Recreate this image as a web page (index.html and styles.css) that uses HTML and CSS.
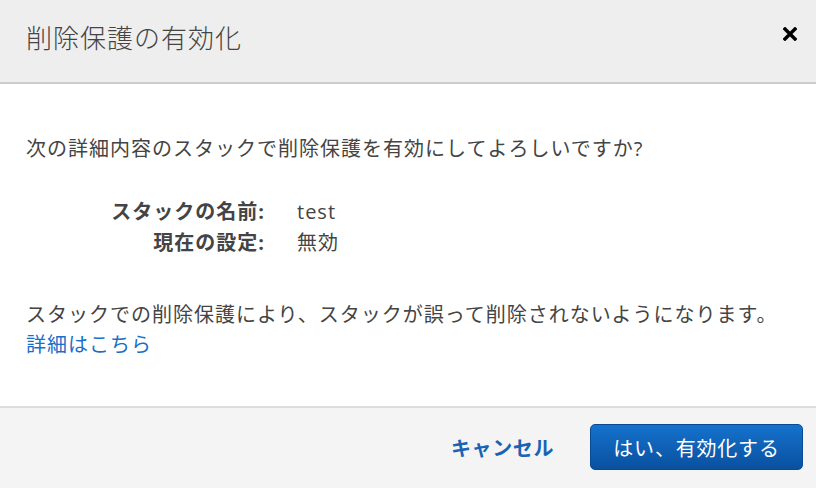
FILE: index.html
```html
<!DOCTYPE html>
<html lang="ja">
<head>
    <meta charset="UTF-8">
    <meta name="viewport" content="width=device-width, initial-scale=1.0">
    <title>削除保護の有効化</title>
    <link rel="stylesheet" href="styles.css">
</head>
<body>

    <div class="modal">
        <div class="modal-header">
            <h2>削除保護の有効化</h2>
            <span class="close">
                <svg width="14" height="14" viewBox="0 0 14 14">
                    <path d="M2 2 L12 12 M12 2 L2 12" stroke="#000" stroke-width="3.4" stroke-linecap="square"/>
                </svg>
            </span>
        </div>

        <div class="modal-body">
            <p class="question">次の詳細内容のスタックで削除保護を有効にしてよろしいですか?</p>

            <div class="details">
                <div class="label">スタックの名前:</div>
                <div class="value">test</div>
                <div class="label">現在の設定:</div>
                <div class="value">無効</div>
            </div>

            <p class="note">
                スタックでの削除保護により、スタックが誤って削除されないようになります。<br>
                <a href="#">詳細はこちら</a>
            </p>
        </div>

        <div class="modal-footer">
            <button class="btn-cancel">キャンセル</button>
            <button class="btn-primary">はい、有効化する</button>
        </div>
    </div>

</body>
</html>
```

FILE: styles.css
```css
html, body {
    margin: 0;
    padding: 0;
    height: 100%;
}

body {
    font-family: "Open Sans", "Noto Sans CJK JP", sans-serif;
    color: #444;
    background-color: #fff;
}

.modal {
    display: flex;
    flex-direction: column;
    height: 488px;
}

.modal-header {
    display: flex;
    align-items: center;
    justify-content: space-between;
    height: 82px;
    padding: 0 19px 0 26px;
    background-color: #eee;
    border-bottom: 2px solid #ccc;
}

.modal-header h2 {
    margin: 0 0 8px;
    font-size: 26px;
    font-weight: 300;
    color: #444;
    letter-spacing: 1px;
}

.close {
    display: flex;
    margin-bottom: 14px;
    cursor: pointer;
}

.modal-body {
    flex: 1;
    padding: 0 26px;
    font-size: 20px;
    letter-spacing: 1px;
}

.question {
    margin: 50px 0 0;
    line-height: 30px;
}

.details {
    display: grid;
    grid-template-columns: 239px auto;
    column-gap: 32px;
    row-gap: 1px;
    margin-top: 33px;
    line-height: 30px;
}

.label {
    text-align: right;
    font-weight: bold;
}

.note {
    margin: 42px 0 0;
    line-height: 30px;
}

.note a {
    color: #1a6fc9;
    text-decoration: none;
}

.modal-footer {
    display: flex;
    align-items: center;
    justify-content: flex-end;
    gap: 36px;
    height: 78px;
    padding: 0 13px 2px 0;
    background-color: #f4f4f4;
    border-top: 2px solid #ddd;
}

.btn-cancel {
    background: none;
    border: none;
    padding: 0;
    font-family: inherit;
    font-size: 20px;
    font-weight: bold;
    color: #1a62b4;
    letter-spacing: 0.6px;
    cursor: pointer;
}

.btn-primary {
    width: 213px;
    height: 46px;
    font-family: inherit;
    font-size: 20px;
    color: #fff;
    letter-spacing: 0.8px;
    background: linear-gradient(#1572cc, #0a50a0);
    border: 1px solid #0a4a94;
    border-radius: 5px;
    cursor: pointer;
}
```
